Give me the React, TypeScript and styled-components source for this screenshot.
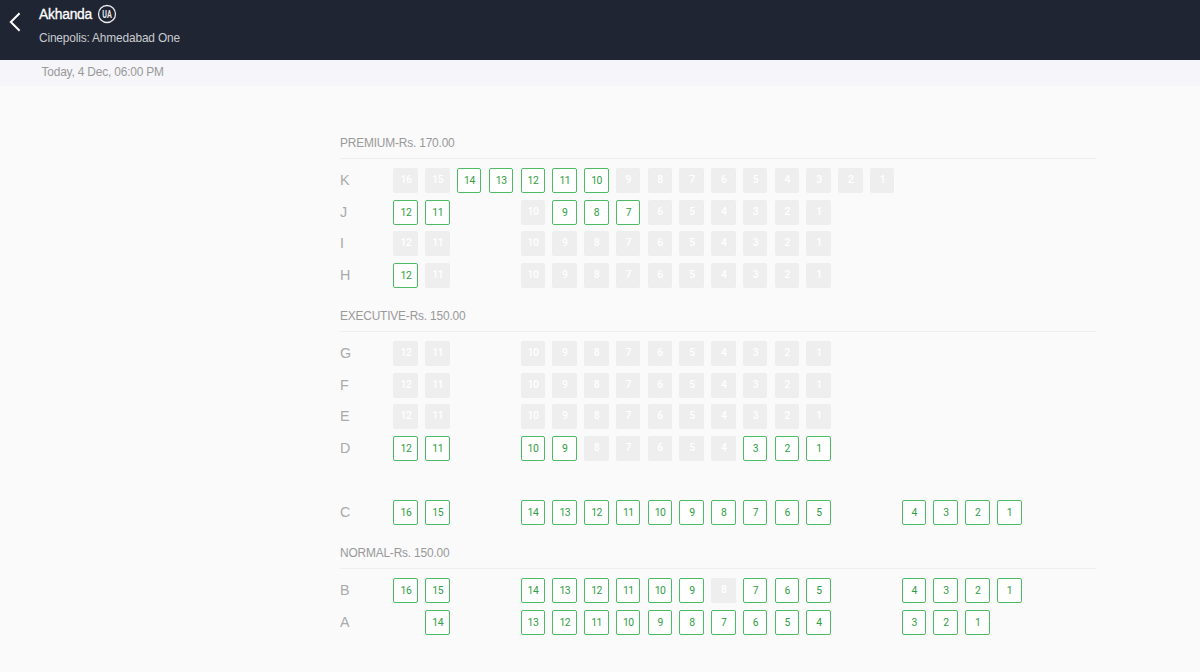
import React from 'react';
import styled, { createGlobalStyle } from 'styled-components';

const GlobalStyle = createGlobalStyle`
  * { box-sizing: border-box; }
  body { margin: 0; background: #fafafa; font-family: "Liberation Sans", Arial, sans-serif; }
`;

const Page = styled.div`
  height: 672px;
  overflow: hidden;
  background: #fafafa;
`;

const Header = styled.header`
  display: flex;
  height: 60px;
  background: #1f2533;
`;

const BackButton = styled.button`
  width: 39px;
  height: 44px;
  padding: 0 0 0 9px;
  border: 0;
  background: none;
  display: flex;
  align-items: center;
`;

const MovieInfo = styled.div`
  padding-top: 4px;
`;

const TitleRow = styled.div`
  display: flex;
  align-items: center;
  gap: 5px;
  height: 20px;
`;

const Title = styled.h1`
  margin: 0;
  padding-top: 2px;
  color: #fff;
  font-size: 13.8px;
  font-weight: 400;
  letter-spacing: -0.2px;
  line-height: 20px;
  -webkit-text-stroke: 0.3px #fff;
`;

const Venue = styled.div`
  margin-top: 5px;
  color: #c9cbd0;
  font-size: 11.9px;
  letter-spacing: -0.16px;
  line-height: 18px;
`;

const ShowBar = styled.div`
  height: 26px;
  padding-left: 41.5px;
  background: #f5f5fa;
  color: #999;
  font-size: 11.9px;
  letter-spacing: -0.17px;
  line-height: 25px;
`;

const SeatPlan = styled.main`
  width: 756px;
  margin: 38px 0 0 340px;
`;

const Section = styled.section<{ $height: number }>`
  height: ${(p) => p.$height}px;
`;

const SectionTitle = styled.h2`
  height: 35px;
  margin: 0 0 8.9px;
  padding-top: 10px;
  border-bottom: 1px solid #eeeeee;
  color: #999;
  font-size: 11.9px;
  font-weight: 400;
  letter-spacing: -0.17px;
  line-height: 18px;
`;

const Row = styled.div<{ $spaced?: boolean }>`
  display: grid;
  grid-template-columns: 46.2px repeat(20, 24.5px);
  column-gap: 7.27px;
  height: 24.6px;
  margin-top: ${(p) => (p.$spaced ? 38.9 : 0)}px;
  margin-bottom: 7.15px;
`;

const RowLabel = styled.span`
  color: #aaa;
  font-size: 14.3px;
  line-height: 25px;
`;

const Seat = styled.span<{ $open: boolean }>`
  border: 1px solid ${(p) => (p.$open ? '#4dbb65' : '#eeeeee')};
  border-radius: 2px;
  background: ${(p) => (p.$open ? '#fff' : '#eeeeee')};
  color: ${(p) => (p.$open ? '#2f9e44' : '#ffffff')};
  font-family: Roboto, sans-serif;
  font-size: 10.4px;
  font-weight: ${(p) => (p.$open ? 400 : 500)};
  letter-spacing: -0.4px;
  line-height: ${(p) => (p.$open ? 23 : 21)}px;
  text-align: center;
  padding-left: 0.6px;
`;

type RowData = {
  label: string;
  blocks: [column: number, from: number, to: number][];
  open: number[];
  spaced?: boolean;
};

const range = (from: number, to: number) =>
  Array.from({ length: from - to + 1 }, (_, i) => from - i);

const center: RowData['blocks'] = [[0, 12, 11], [4, 10, 1]];
const full: RowData['blocks'] = [[0, 16, 15], [4, 14, 5], [16, 4, 1]];

const sections: { title: string; height: number; rows: RowData[] }[] = [
  {
    title: 'PREMIUM-Rs. 170.00',
    height: 173,
    rows: [
      { label: 'K', blocks: [[0, 16, 1]], open: [14, 13, 12, 11, 10] },
      { label: 'J', blocks: center, open: [12, 11, 9, 8, 7] },
      { label: 'I', blocks: center, open: [] },
      { label: 'H', blocks: center, open: [12] },
    ],
  },
  {
    title: 'EXECUTIVE-Rs. 150.00',
    height: 237,
    rows: [
      { label: 'G', blocks: center, open: [] },
      { label: 'F', blocks: center, open: [] },
      { label: 'E', blocks: center, open: [] },
      { label: 'D', blocks: center, open: [12, 11, 10, 9, 3, 2, 1] },
      { label: 'C', blocks: full, open: range(16, 1), spaced: true },
    ],
  },
  {
    title: 'NORMAL-Rs. 150.00',
    height: 110,
    rows: [
      { label: 'B', blocks: full, open: range(16, 1).filter((n) => n !== 8) },
      { label: 'A', blocks: [[1, 14, 14], [4, 13, 4], [16, 3, 1]], open: range(14, 1) },
    ],
  },
];

// Grid column 1 holds the row label, so seat positions start at column 2.
const Placed = styled(Seat)<{ $column: number }>`
  grid-column: ${(p) => p.$column + 2};
  grid-row: 1;
`;

const CertificateIcon = () => (
  <svg width="20" height="20" viewBox="0 0 20 20" aria-label="UA">
    <circle cx="10" cy="10" r="8.5" fill="none" stroke="#e8e9eb" strokeWidth="1.3" />
    <text
      x="10"
      y="13.8"
      fill="#e8e9eb"
      fontFamily="Roboto, sans-serif"
      fontSize="10.8"
      fontWeight="700"
      textAnchor="middle"
      textLength="9.4"
      lengthAdjust="spacingAndGlyphs"
    >
      UA
    </text>
  </svg>
);

export default function App() {
  return (
    <Page>
      <GlobalStyle />
      <Header>
        <BackButton aria-label="Back">
          <svg width="12" height="20" viewBox="0 0 12 20">
            <path d="M10.6 1.2 1.8 10l8.8 8.8" fill="none" stroke="#fff" strokeWidth="2" />
          </svg>
        </BackButton>
        <MovieInfo>
          <TitleRow>
            <Title>Akhanda</Title>
            <CertificateIcon />
          </TitleRow>
          <Venue>Cinepolis: Ahmedabad One</Venue>
        </MovieInfo>
      </Header>
      <ShowBar>Today, 4 Dec, 06:00 PM</ShowBar>
      <SeatPlan>
        {sections.map((section) => (
          <Section key={section.title} $height={section.height}>
            <SectionTitle>{section.title}</SectionTitle>
            {section.rows.map((row) => (
              <Row key={row.label} $spaced={row.spaced}>
                <RowLabel>{row.label}</RowLabel>
                {row.blocks.flatMap(([column, from, to]) =>
                  range(from, to).map((n, i) => (
                    <Placed key={n} $column={column + i} $open={row.open.includes(n)}>
                      {n}
                    </Placed>
                  )),
                )}
              </Row>
            ))}
          </Section>
        ))}
      </SeatPlan>
    </Page>
  );
}
